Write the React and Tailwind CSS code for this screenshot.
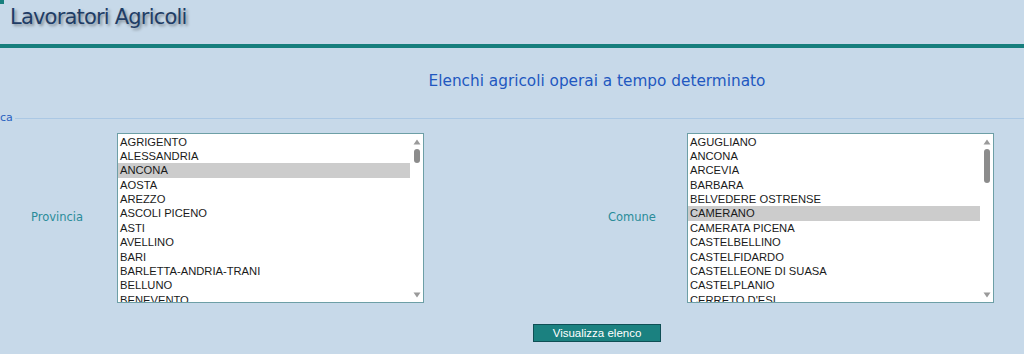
import React from "react";

const provinces = [
  "AGRIGENTO",
  "ALESSANDRIA",
  "ANCONA",
  "AOSTA",
  "AREZZO",
  "ASCOLI PICENO",
  "ASTI",
  "AVELLINO",
  "BARI",
  "BARLETTA-ANDRIA-TRANI",
  "BELLUNO",
  "BENEVENTO",
  "BERGAMO",
];

const comuni = [
  "AGUGLIANO",
  "ANCONA",
  "ARCEVIA",
  "BARBARA",
  "BELVEDERE OSTRENSE",
  "CAMERANO",
  "CAMERATA PICENA",
  "CASTELBELLINO",
  "CASTELFIDARDO",
  "CASTELLEONE DI SUASA",
  "CASTELPLANIO",
  "CERRETO D'ESI",
  "CHIARAVALLE",
];

function ListBox({ items, selected, thumbH }) {
  return (
    <div className="flex h-[170px] w-[307px] border border-[#6d9fa6] bg-white overflow-hidden">
      <div className="flex-1 overflow-hidden pt-[0.5px]">
        {items.map((it) => (
          <div
            key={it}
            className={
              "h-[14.4px] pl-[2px] leading-[14.4px] text-[11.2px] text-[#1a1a1a] whitespace-nowrap font-['Liberation_Sans',Arial,sans-serif] " +
              (it === selected ? "bg-[#cccccc]" : "")
            }
          >
            {it}
          </div>
        ))}
      </div>
      <div className="w-[13px] flex flex-col items-center pt-[5px] pb-[4px]">
        <svg width="8" height="6" viewBox="0 0 8 6" className="shrink-0">
          <path d="M4 0.5 L7.5 5.5 L0.5 5.5 Z" fill="#9a9a9a" />
        </svg>
        <div
          className="mt-[4px] w-[6px] rounded-full bg-[#8c8c8c]"
          style={{ height: thumbH }}
        />
        <div className="flex-1" />
        <svg width="8" height="6" viewBox="0 0 8 6" className="shrink-0">
          <path d="M0.5 0.5 L7.5 0.5 L4 5.5 Z" fill="#9a9a9a" />
        </svg>
      </div>
    </div>
  );
}

export default function App() {
  return (
    <div className="w-[1024px] h-[354px] overflow-hidden bg-[#c7d9e9]">
      <div className="w-[1194px]">
        {/* header */}
        <div className="relative h-[44px]">
          <div className="absolute left-0 top-0 h-[4px] w-[4px] bg-[#177f7d]" />
          <div className="pl-[10px] pt-[4px] text-[21px] leading-[26px] tracking-[-0.8px] text-[#1f3d66] font-['DejaVu_Sans',Verdana,sans-serif] [text-shadow:2px_2px_3px_rgba(0,0,0,0.35)]">
            Lavoratori Agricoli
          </div>
        </div>
        <div className="h-[4px] bg-[#177f7d]" />

        {/* heading */}
        <div className="flex justify-center pt-[23px] h-[64px]">
          <span className="text-[15.3px] leading-[20px] text-[#2157c0] font-['DejaVu_Sans',Verdana,sans-serif]">
            Elenchi agricoli operai a tempo determinato
          </span>
        </div>

        {/* fieldset legend line */}
        <div className="flex items-center h-[12px]">
          <span className="text-[11px] leading-[12px] text-[#2a62c0] font-['DejaVu_Sans',Verdana,sans-serif]">
            ca
          </span>
          <div className="ml-[2px] flex-1 h-px bg-[#abc8e4]" />
        </div>

        {/* form */}
        <div className="mt-[9px] grid grid-cols-[117px_307px_183px_80px_307px] items-center">
          <div className="pl-[31px] text-[11.5px] text-[#2a8c99] font-['DejaVu_Sans',Verdana,sans-serif]">
            Provincia
          </div>
          <ListBox items={provinces} selected="ANCONA" thumbH={14} />
          <div />
          <div className="pl-[1px] text-[11.5px] text-[#2a8c99] font-['DejaVu_Sans',Verdana,sans-serif]">
            Comune
          </div>
          <ListBox items={comuni} selected="CAMERANO" thumbH={34} />
        </div>

        {/* button */}
        <div className="flex justify-center mt-[21px]">
          <button className="h-[18px] w-[128px] bg-[#1b8180] border border-[#0f4f55] text-white text-[11.5px] leading-[16px] font-['Liberation_Sans',Arial,sans-serif]">
            Visualizza elenco
          </button>
        </div>
      </div>
    </div>
  );
}
